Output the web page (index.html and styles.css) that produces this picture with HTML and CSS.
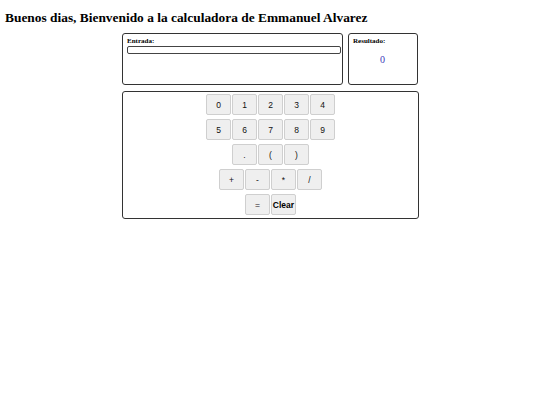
FILE: index.html
```html
<!DOCTYPE html>
<html>
<head>
<meta charset="utf-8">
<link rel="stylesheet" href="styles.css">
</head>
<body>
<h3 class="title">Buenos dias, Bienvenido a la calculadora de Emmanuel Alvarez</h3>
<div class="calc">
  <div class="top">
    <div class="panel entrada">
      <div class="label">Entrada:</div>
      <div class="input"></div>
    </div>
    <div class="panel resultado">
      <div class="label">Resultado:</div>
      <div class="value">0</div>
    </div>
  </div>
  <div class="panel keypad">
    <div class="row"><span class="key">0</span><span class="key">1</span><span class="key">2</span><span class="key">3</span><span class="key">4</span></div>
    <div class="row"><span class="key">5</span><span class="key">6</span><span class="key">7</span><span class="key">8</span><span class="key">9</span></div>
    <div class="row"><span class="key">.</span><span class="key">(</span><span class="key">)</span></div>
    <div class="row"><span class="key">+</span><span class="key">-</span><span class="key">*</span><span class="key">/</span></div>
    <div class="row"><span class="key">=</span><span class="key bold">Clear</span></div>
  </div>
</div>
</body>
</html>
```
FILE: styles.css
```css
html, body { margin: 0; padding: 0; background: #fff; }
body { font-family: "Liberation Serif", "Times New Roman", serif; color: #000; }
.title {
  margin: 0;
  padding: 10px 0 0 5px;
  font-size: 13.4px;
  font-weight: bold;
  line-height: 15px;
}
.calc {
  width: 297px;
  margin: 8px 0 0 122px;
  display: flex;
  flex-direction: column;
  gap: 6px;
}
.top { display: flex; gap: 5px; }
.panel {
  border: 1px solid #333;
  border-radius: 3px;
  box-sizing: border-box;
}
.entrada { width: 221px; height: 52px; padding: 4px 1px 0 4px; }
.resultado { width: 70px; height: 52px; padding: 4px 0 0 4px; }
.label { font-size: 7px; font-weight: bold; line-height: 7px; }
.input {
  margin-top: 1px;
  height: 8px;
  border: 1px solid #444;
  border-radius: 2px;
  box-sizing: border-box;
}
.value {
  margin-top: 9px;
  padding-left: 27px;
  font-size: 10px;
  color: #3a3ab8;
}
.keypad {
  height: 128px;
  padding: 2px 0 0 0;
  display: flex;
  flex-direction: column;
  align-items: center;
  gap: 4px;
}
.row { display: flex; gap: 1px; }
.key {
  width: 25px;
  height: 21px;
  box-sizing: border-box;
  background: #efefef;
  border: 1px solid #cfcfcf;
  border-radius: 2px;
  font-family: "Liberation Sans", Arial, sans-serif;
  font-size: 8.5px;
  color: #111;
  display: flex;
  align-items: center;
  justify-content: center;
}
.key.bold { font-weight: bold; color: #000; }
```
